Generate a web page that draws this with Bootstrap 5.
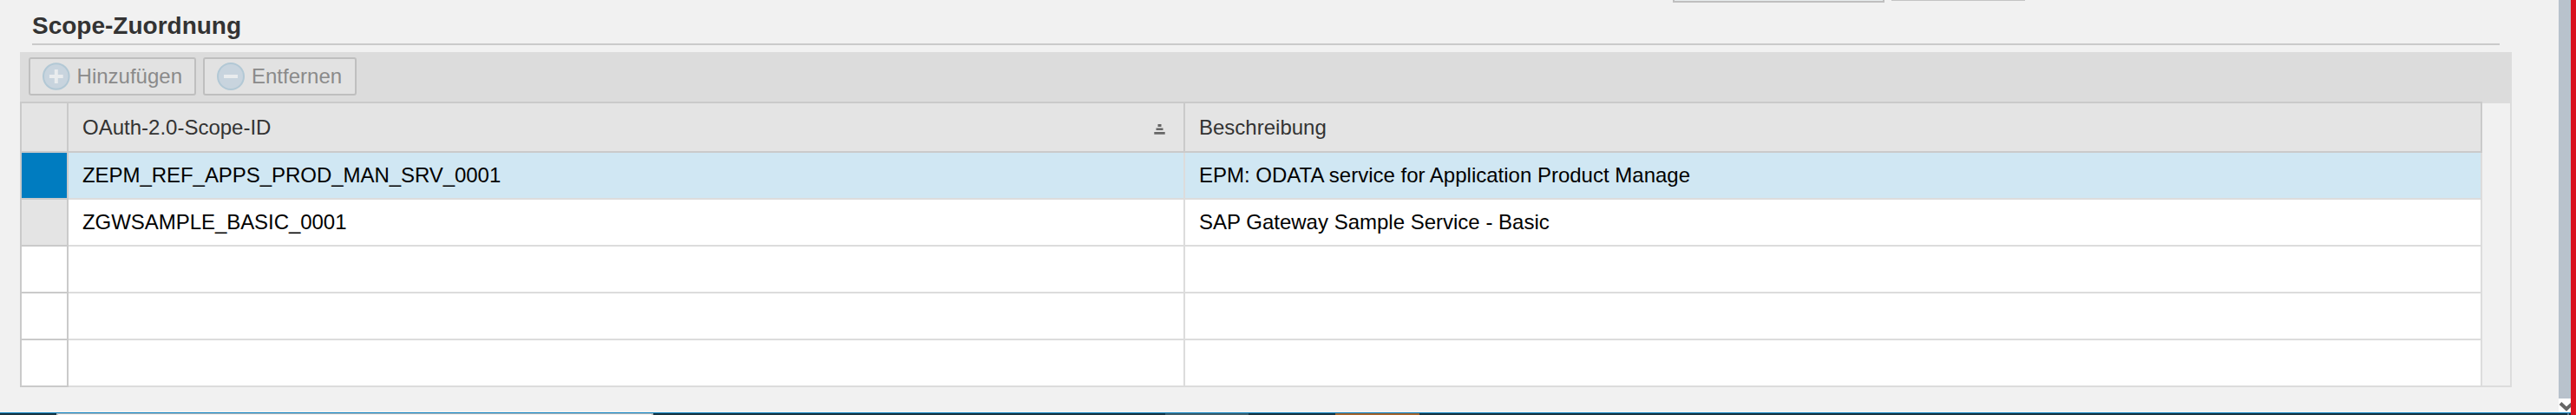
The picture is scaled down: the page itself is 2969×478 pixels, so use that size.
<!DOCTYPE html>
<html lang="de">
<head>
<meta charset="utf-8">
<title>Scope-Zuordnung</title>
<link href="https://cdn.jsdelivr.net/npm/bootstrap@5.3.0/dist/css/bootstrap.min.css" rel="stylesheet">
<style>
body{font:24px/52px "Liberation Sans",Arial,sans-serif;background:#f1f1f1;color:#000;height:478px;overflow:hidden}
.desk{height:475px}
.page-area{padding-left:23px;width:2949px}
.upper{height:3px;padding-left:1905px;gap:8px}
.upper-a{width:244px;height:3px;border:2px solid #bfbfbf;border-top:0;background:#e8eced}
.upper-b{width:154px;height:1px;background:#c4c4c4}
.section-title{font-size:28px;font-weight:700;line-height:32px;color:#333;height:49px;padding-top:11px;margin:0 14px 8px;border-bottom:2px solid #cacaca;width:2844px}
.panel{width:2872px;height:386px}
.tools{background:#dcdcdc;height:57px;padding:6px 10px;gap:8px}
.tool-btn{height:44px;border:2px solid #bfbfbf;border-radius:3px;background:#e2e2e2;color:#8a8a8a;padding:0 14px;font-size:24px;line-height:40px;opacity:1!important;gap:8px}
.tool-btn:disabled{border-color:#bfbfbf;background:#e2e2e2;color:#8a8a8a}
.b1{width:193px}.b2{width:177px}
.scopes{width:2838px;border-collapse:separate;border-spacing:0;table-layout:fixed;margin:0;border-top:2px solid #cacaca;border-left:2px solid #cacaca}
.scopes th,.scopes td{height:54px;padding:0 16px;border-right:2px solid #dcdcdc;border-bottom:2px solid #dcdcdc;background:#fff;font-weight:400;text-align:left;line-height:52px}
.scopes thead th{height:57px;line-height:55px;background:#e4e4e4;color:#333;border-color:#cacaca}
.scopes .sel{border-color:#cacaca;padding:0}
.scopes .off{background:#e4e4e4}
.scopes .on td{background:#d0e7f3}
.scopes .on .sel{background:#007cc0}
.scope-id{letter-spacing:-.05px}
.gutter{width:34px;border-top:2px solid #dcdcdc;border-right:2px solid #dcdcdc;border-bottom:2px solid #dcdcdc}
.sorter{margin-right:5px;margin-top:4px}
.track{width:14px;background:#b8c2cc}
.track-end{height:16px;background:#fff}
.edge{width:6px;background:#d9111e}
.blue-line{height:1px;background:#007cc0}
.taskbar{height:2px;background:#1d3642}
.task-search{width:688px;margin-left:65px;background:#f4f4f4;border:solid #bdbdbd;border-width:1px 2px 0}
.task-app{width:96px;margin-left:590px;background:#45606b}
.task-alert{width:97px;margin-left:100px;background:#a5662f}
.task-tray{width:2px;margin-left:1323px;background:#6f7c8c}
</style>
</head>
<body>
<div class="d-flex">
<div class="flex-grow-1">
<div class="d-flex desk">
  <main class="page-area">
    <div class="upper d-flex"><div class="upper-a"></div><div class="upper-b"></div></div>
    <h1 class="section-title">Scope-Zuordnung</h1>
    <section class="panel">
      <div class="tools d-flex">
        <button class="btn tool-btn b1 d-flex align-items-center" disabled>
          <svg width="32" height="32" viewBox="0 0 32 32"><circle cx="16" cy="16" r="15" fill="#c8d4de" stroke="#b2c8d5" stroke-width="2"/><path d="M8 16H24M16 8V24" stroke="#e9ecee" stroke-width="4"/></svg>Hinzufügen</button>
        <button class="btn tool-btn b2 d-flex align-items-center" disabled>
          <svg width="32" height="32" viewBox="0 0 32 32"><circle cx="16" cy="16" r="15" fill="#c8d4de" stroke="#b2c8d5" stroke-width="2"/><path d="M8 16H24" stroke="#e9ecee" stroke-width="4"/></svg>Entfernen</button>
      </div>
      <div class="d-flex">
        <table class="scopes">
          <colgroup><col style="width:54px"><col style="width:1287px"><col style="width:1495px"></colgroup>
          <thead><tr><th class="sel off"></th><th><div class="d-flex justify-content-between align-items-center">OAuth-2.0-Scope-ID<svg class="sorter" width="13" height="12" viewBox="0 0 13 12" fill="#666"><path d="M4.5 0h4v3h-4zM2.5 4.5h8v2.6h-8zM.3 9h12.4v2.7H.3z"/></svg></div></th><th>Beschreibung</th></tr></thead>
          <tbody>
            <tr class="on"><td class="sel"></td><td class="scope-id">ZEPM_REF_APPS_PROD_MAN_SRV_0001</td><td>EPM: ODATA service for Application Product Manage</td></tr>
            <tr><td class="sel off"></td><td class="scope-id">ZGWSAMPLE_BASIC_0001</td><td>SAP Gateway Sample Service - Basic</td></tr>
            <tr><td class="sel"></td><td></td><td></td></tr>
            <tr><td class="sel"></td><td></td><td></td></tr>
            <tr><td class="sel"></td><td></td><td></td></tr>
          </tbody>
        </table>
        <div class="gutter"></div>
      </div>
    </section>
  </main>
  <div class="track d-flex flex-column justify-content-end"><div class="track-end d-flex"><svg width="14" height="16" viewBox="0 0 14 16"><path d="M2 5.5L9 12L16 5.5" fill="none" stroke="#666" stroke-width="4"/></svg></div></div>
</div>
<div class="blue-line"></div>
<div class="taskbar d-flex"><div class="task-search"></div><div class="task-app"></div><div class="task-alert"></div><div class="task-tray"></div></div>
</div>
<div class="edge"></div>
</div>
<script src="https://cdn.jsdelivr.net/npm/bootstrap@5.3.0/dist/js/bootstrap.bundle.min.js"></script>
</body>
</html>
